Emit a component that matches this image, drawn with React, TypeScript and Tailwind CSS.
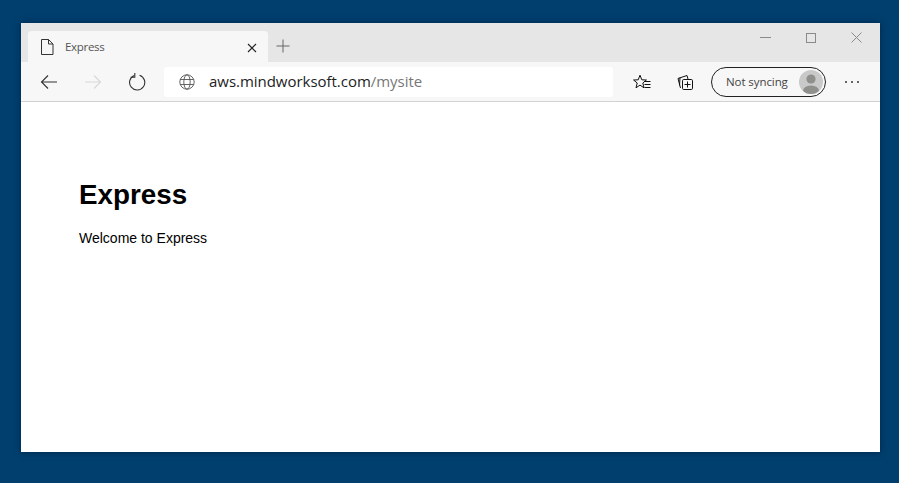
export default function App() {
  const ui = "font-['Open_Sans',sans-serif]";
  return (
    <div className="w-[899px] h-[483px] bg-[#003f6e] pt-[23px] pl-[21px] overflow-hidden">
      <div className="w-[859px] h-[429px] bg-white flex flex-col shadow-[0_0_6px_rgba(0,20,50,0.6)]">
        {/* tab strip */}
        <div className="h-[39px] bg-[#e6e6e6] flex items-end pl-[7px] relative shrink-0">
          <div className={`w-[240px] h-[31px] bg-[#f7f7f7] rounded-t-[4px] flex items-center pl-[11px] pr-[11px] ${ui}`}>
            <svg width="16" height="18" viewBox="0 0 16 18" fill="none" stroke="#333" strokeWidth="1" className="shrink-0">
              <path d="M2.5 1.5h7l4.5 4.5v10.5h-11.5z" />
              <path d="M9.5 1.5v4.5h4.5" />
            </svg>
            <span className="ml-[10px] text-[11.5px] text-[#555] tracking-[-0.3px] flex-1">Express</span>
            <svg width="10" height="10" viewBox="0 0 10 10" stroke="#222" strokeWidth="1.1" className="shrink-0 mt-[2px]">
              <path d="M1 1l8 8M9 1l-8 8" />
            </svg>
          </div>
          <div className="ml-[8px] mb-[9px]">
            <svg width="14" height="14" viewBox="0 0 14 14" stroke="#666" strokeWidth="1">
              <path d="M7 0.5v13M0.5 7h13" />
            </svg>
          </div>
          <div className="absolute right-[18px] top-[9px] flex items-center gap-[35px]">
            <svg width="11" height="11" viewBox="0 0 11 11" stroke="#8a8a8a" strokeWidth="1"><path d="M0 5.5h11" /></svg>
            <svg width="10" height="10" viewBox="0 0 10 10" fill="none" stroke="#8a8a8a" strokeWidth="1"><rect x="0.5" y="0.5" width="9" height="9" /></svg>
            <svg width="11" height="11" viewBox="0 0 11 11" stroke="#8a8a8a" strokeWidth="1"><path d="M0.5 0.5l10 10M10.5 0.5l-10 10" /></svg>
          </div>
        </div>
        {/* toolbar */}
        <div className="h-[40px] bg-[#f7f7f7] border-b border-[#d2d2d2] flex items-center shrink-0 pl-[19px]">
          <svg width="18" height="16" viewBox="0 0 18 16" fill="none" stroke="#333" strokeWidth="1.1" className="shrink-0">
            <path d="M17 8H1.5M8 1.5L1.5 8l6.5 6.5" />
          </svg>
          <svg width="18" height="16" viewBox="0 0 18 16" fill="none" stroke="#d8d8d8" strokeWidth="1.1" className="ml-[26px] shrink-0">
            <path d="M1 8h15.5M10 1.5L16.5 8 10 14.5" />
          </svg>
          <svg width="18" height="18" viewBox="0 0 18 18" fill="none" stroke="#333" strokeWidth="1.1" className="ml-[26px] shrink-0">
            <path d="M6.2 2.4A7.6 7.6 0 1 0 11.6 2.2" />
            <path d="M6.8 0.2v4.4H2.6" transform="translate(0 -0.4)" />
          </svg>
          <div className={`ml-[18px] w-[449px] h-[30px] bg-white rounded-[3px] flex items-center pl-[15px] shrink-0 ${ui}`}>
            <svg width="16" height="16" viewBox="0 0 16 16" fill="none" stroke="#555" strokeWidth="0.9" className="shrink-0">
              <circle cx="8" cy="8" r="7.2" />
              <ellipse cx="8" cy="8" rx="3.2" ry="7.2" />
              <path d="M1.2 5.5h13.6M1.2 10.5h13.6" />
            </svg>
            <span className="ml-[14px] text-[15px] tracking-[-0.03px] text-[#222]">
              aws.mindworksoft.com<span className="text-[#777]">/mysite</span>
            </span>
          </div>
          <svg width="18" height="17" viewBox="0 0 18 17" fill="none" stroke="#111" strokeWidth="1" className="ml-[20px] mt-[1px] shrink-0">
            <path d="M7 1.2l1.8 4.6 4.6.2-3.6 3 1.2 4.8-4-2.7-4 2.7 1.2-4.8L.6 6l4.6-.2z" />
            <path d="M11.5 7.5h6M11.5 10.5h6M11.5 13.5h6" />
          </svg>
          <svg width="16" height="16" viewBox="0 0 16 16" fill="none" stroke="#111" strokeWidth="1" className="ml-[26px] shrink-0">
            <path d="M1 4.5l9-3 1 3.5" />
            <path d="M1 4.5l2.5 9.5" />
            <path d="M3 3.5l-.5 8" />
            <rect x="5.5" y="5.5" width="10" height="10" rx="1.2" fill="#f7f7f7" />
            <path d="M10.5 7.5v6M7.5 10.5h6" />
          </svg>
          <div className={`ml-[18px] w-[115px] h-[30px] rounded-full border border-[#222] flex items-center pl-[14px] pr-[2px] shrink-0 ${ui}`}>
            <span className="text-[11.5px] tracking-[-0.08px] text-[#444] flex-1 whitespace-nowrap">Not syncing</span>
            <div className="w-[24px] h-[24px] rounded-full bg-[#c9c9c9] overflow-hidden shrink-0">
              <svg width="24" height="24" viewBox="0 0 24 24" fill="#8f8f8c">
                <circle cx="12" cy="9" r="4.6" />
                <ellipse cx="12" cy="21" rx="8" ry="5.5" />
              </svg>
            </div>
          </div>
          <svg width="16" height="4" viewBox="0 0 16 4" fill="#333" className="ml-[18px] shrink-0">
            <circle cx="2" cy="2" r="1" />
            <circle cx="8" cy="2" r="1" />
            <circle cx="14" cy="2" r="1" />
          </svg>
        </div>
        {/* page */}
        <div className="flex-1 pl-[58px] pt-[77px] font-['Liberation_Sans',sans-serif] text-black">
          <h1 className="text-[27.8px] leading-[32px] font-bold">Express</h1>
          <p className="mt-[19px] text-[14px] leading-[16px]">Welcome to Express</p>
        </div>
      </div>
    </div>
  );
}
